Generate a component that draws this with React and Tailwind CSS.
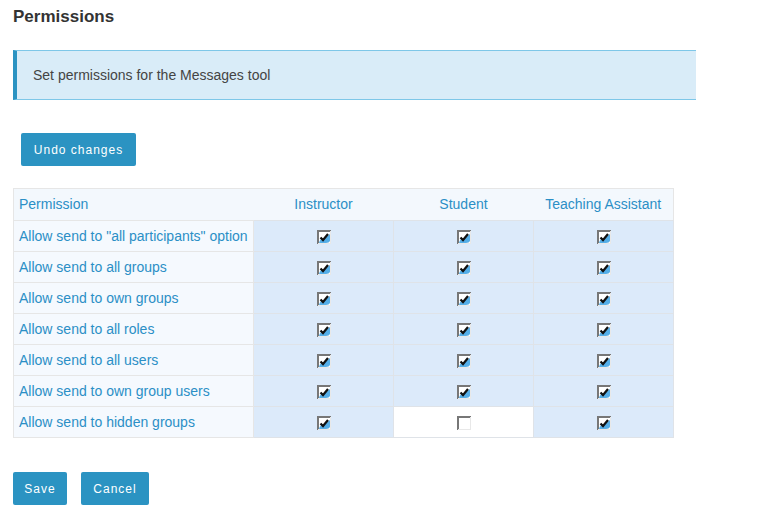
import React from "react";

const roles = ["Instructor", "Student", "Teaching Assistant"];

const permissions = [
  { label: 'Allow send to "all participants" option', values: [true, true, true] },
  { label: "Allow send to all groups", values: [true, true, true] },
  { label: "Allow send to own groups", values: [true, true, true] },
  { label: "Allow send to all roles", values: [true, true, true] },
  { label: "Allow send to all users", values: [true, true, true] },
  { label: "Allow send to own group users", values: [true, true, true] },
  { label: "Allow send to hidden groups", values: [true, false, true] },
];

// old-style checkbox drawing
const Box = ({ checked }) => (
  <svg width="14" height="14" viewBox="0 0 14 14" className="inline-block align-middle">
    <rect x="0" y="0" width="14" height="14" fill="#fff" />
    <rect x="0" y="0" width="14" height="2" fill="#777" />
    <rect x="0" y="0" width="2" height="14" fill="#777" />
    <rect x="13" y="1" width="1" height="13" fill="#e8e8e8" />
    <rect x="1" y="13" width="13" height="1" fill="#e8e8e8" />
    {checked && (
      <>
        <path d="M2 13 Q3 8 8 8 L13 4 L13 11 Q12 13 9 13 Z" fill="#55aee8" />
        <path d="M3.5 7.5 L6 10 L11 4" fill="none" stroke="#111" strokeWidth="2.2" />
      </>
    )}
  </svg>
);

const Btn = ({ children, className = "" }) => (
  <button
    type="button"
    className={`bg-[#2b93c2] text-white text-[12px] tracking-[1px] rounded-[2px] h-[33px] ${className}`}
  >
    {children}
  </button>
);

export default function App() {
  return (
    <div className="w-[766px] h-[520px] bg-white text-[#333] font-['Liberation_Sans',Arial,sans-serif] pl-[13px] pt-[7px]">
      <h2 className="text-[17px] font-bold leading-[20px] text-[#333]">Permissions</h2>

      <div className="mt-[23px] w-[683px] h-[50px] bg-[#d9ecf8] border-y border-[#7ec7e8] border-l-4 border-l-[#2b93c2] flex items-center pl-[16px] text-[14px] text-[#444]">
        Set permissions for the Messages tool
      </div>

      <div className="pl-[8px] mt-[33px]">
        <Btn className="w-[115px]">Undo changes</Btn>
      </div>

      <table className="mt-[22px] border-collapse text-[14px] text-[#2b8fc6]">
        <thead>
          <tr className="h-[32px] bg-[#f3f8fd] border border-[#e6e6e6]">
            <th className="w-[240px] text-left font-normal pl-[5px]">Permission</th>
            {roles.map((r) => (
              <th key={r} className="w-[140px] font-normal text-center">
                {r}
              </th>
            ))}
          </tr>
        </thead>
        <tbody>
          {permissions.map((p) => (
            <tr key={p.label} className="h-[31px]">
              <td className="border border-[#e6e6e6] bg-[#f5f9fe] pl-[5px] whitespace-nowrap">{p.label}</td>
              {p.values.map((v, i) => (
                <td
                  key={i}
                  className={`border border-[#dfe3e8] text-center ${v ? "bg-[#dceafa]" : "bg-white"}`}
                >
                  <Box checked={v} />
                </td>
              ))}
            </tr>
          ))}
        </tbody>
      </table>

      <div className="mt-[34px] flex gap-[14px]">
        <Btn className="w-[54px]">Save</Btn>
        <Btn className="w-[68px]">Cancel</Btn>
      </div>
    </div>
  );
}
